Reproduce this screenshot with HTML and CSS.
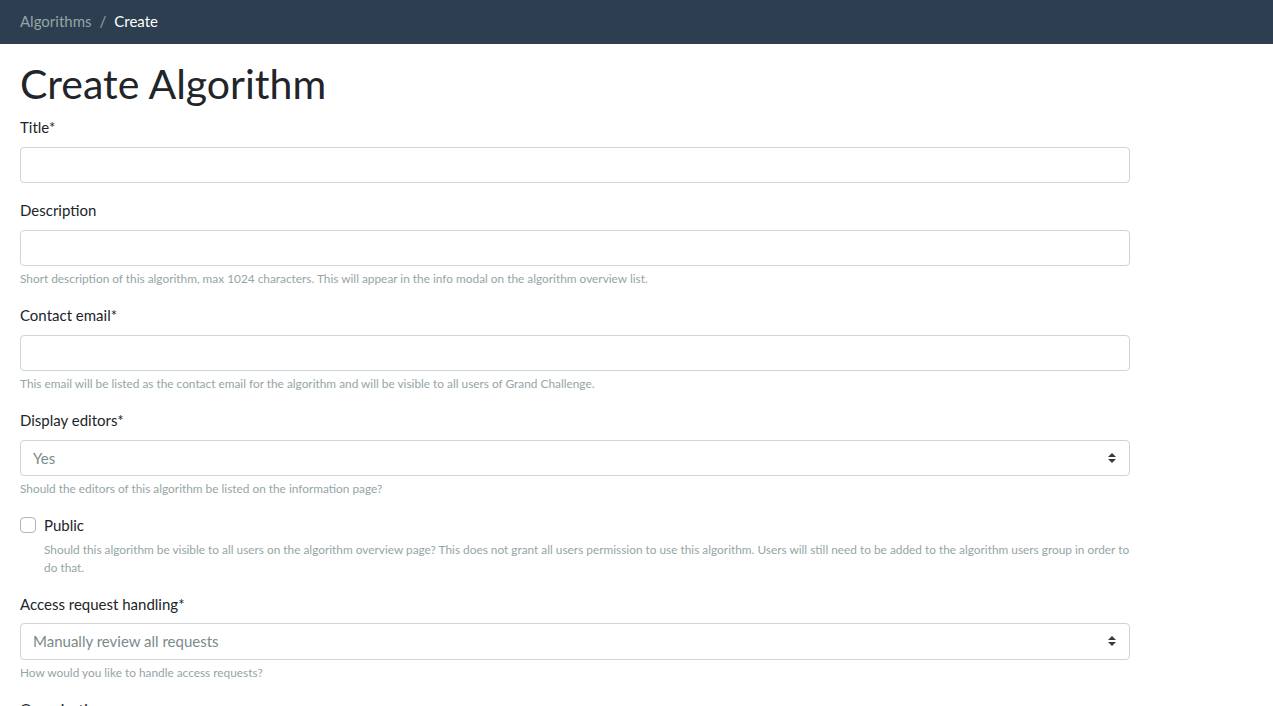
FILE: index.html
```html
<!DOCTYPE html>
<html lang="en">
<head>
<meta charset="utf-8">
<title>Create Algorithm</title>
<link rel="stylesheet" href="styles.css">
</head>
<body>
<nav class="topbar">
  <ol class="crumbs">
    <li class="crumb-link">Algorithms</li>
    <li class="crumb-sep">/</li>
    <li class="crumb-active">Create</li>
  </ol>
</nav>
<main class="page">
  <h1 class="page-title">Create Algorithm</h1>
  <form class="form">
    <div class="group">
      <label class="label">Title*</label>
      <div class="input"></div>
    </div>
    <div class="group">
      <label class="label">Description</label>
      <div class="input"></div>
      <small class="help">Short description of this algorithm, max 1024 characters. This will appear in the info modal on the algorithm overview list.</small>
    </div>
    <div class="group">
      <label class="label">Contact email*</label>
      <div class="input"></div>
      <small class="help">This email will be listed as the contact email for the algorithm and will be visible to all users of Grand Challenge.</small>
    </div>
    <div class="group">
      <label class="label">Display editors*</label>
      <div class="input select">
        <span class="select-value">Yes</span>
        <svg class="select-arrow" viewBox="0 0 4 5" width="8" height="10"><path fill="#343a40" d="M2 0L0 2h4zm0 5L0 3h4z"/></svg>
      </div>
      <small class="help">Should the editors of this algorithm be listed on the information page?</small>
    </div>
    <div class="group check-group">
      <div class="check-row">
        <span class="checkbox"></span>
        <label class="check-label">Public</label>
      </div>
      <small class="help check-help">Should this algorithm be visible to all users on the algorithm overview page? This does not grant all users permission to use this algorithm. Users will still need to be added to the algorithm users group in order to do that.</small>
    </div>
    <div class="group">
      <label class="label">Access request handling*</label>
      <div class="input select">
        <span class="select-value">Manually review all requests</span>
        <svg class="select-arrow" viewBox="0 0 4 5" width="8" height="10"><path fill="#343a40" d="M2 0L0 2h4zm0 5L0 3h4z"/></svg>
      </div>
      <small class="help">How would you like to handle access requests?</small>
    </div>
    <div class="group">
      <label class="label">Organizations</label>
      <div class="input"></div>
    </div>
  </form>
</main>
</body>
</html>
```
FILE: styles.css
```css
* { box-sizing: border-box; }
html, body { margin: 0; padding: 0; }
body {
  font-family: Lato, "Open Sans", sans-serif;
  font-size: 15px;
  line-height: 1.5;
  color: #212529;
  background: #fff;
  overflow: hidden;
}
.topbar {
  background: #2c3e50;
  height: 44px;
  display: flex;
  align-items: center;
  padding: 0 20px 2px;
}
.crumbs {
  list-style: none;
  margin: 0;
  padding: 0;
  display: flex;
  gap: 8px;
  font-size: 15px;
}
.crumb-link { color: #95a5a6; }
.crumb-sep { color: #95a5a6; }
.crumb-active { color: #fff; }
.page {
  padding: 16px 20px 0;
  max-width: 1150px;
}
.page-title {
  font-size: 41px;
  font-weight: 400;
  line-height: 48px;
  margin: 0 0 8px;
}
.form { display: flex; flex-direction: column; }
.group {
  display: flex;
  flex-direction: column;
  margin-bottom: 16px;
}
.label {
  display: block;
  margin-bottom: 8px;
}
.input {
  height: 36.5px;
  border: 1px solid #ced4da;
  border-radius: 4px;
  background: #fff;
}
.select {
  position: relative;
  display: flex;
  align-items: center;
  padding: 0 12px;
}
.select-value { color: #7b8a8b; font-size: 15px; }
.select-arrow {
  position: absolute;
  right: 13px;
  top: 50%;
  margin-top: -5px;
}
.help {
  display: block;
  margin-top: 4px;
  font-size: 11.85px;
  line-height: 18px;
  color: #95a5a6;
}
.check-row {
  display: flex;
  align-items: center;
  gap: 8px;
}
.checkbox {
  width: 16px;
  height: 16px;
  border: 1px solid #adb5bd;
  border-radius: 4px;
  background: #fff;
  flex: none;
}
.check-help { padding-left: 24px; }
```
